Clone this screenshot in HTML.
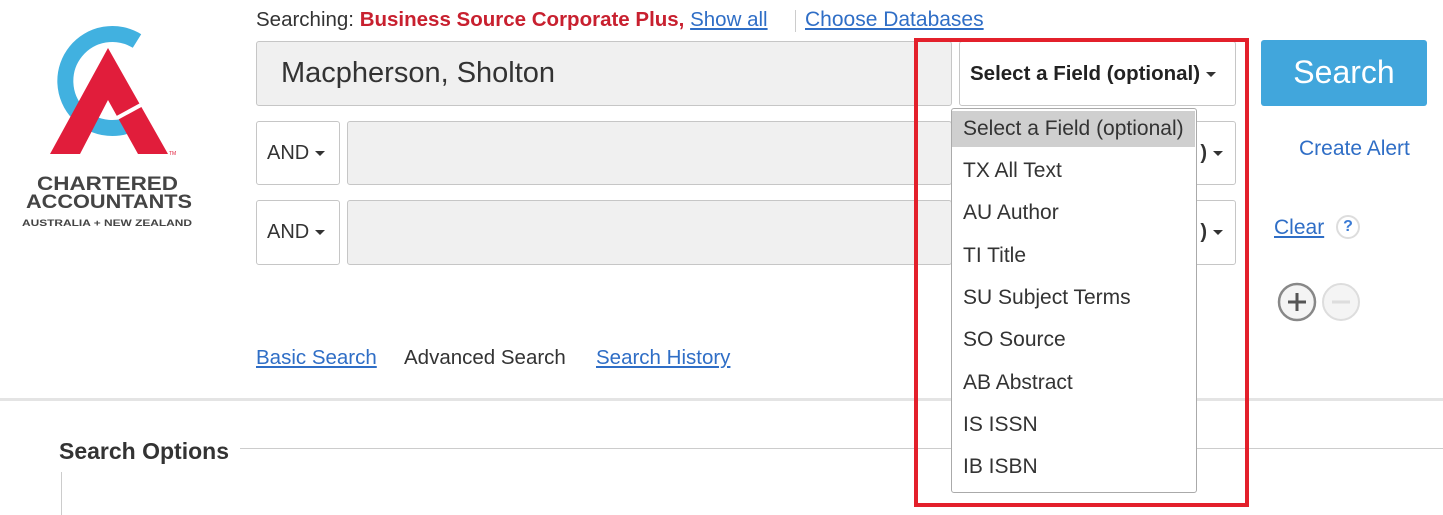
<!DOCTYPE html>
<html><head><style>
*{margin:0;padding:0;box-sizing:border-box}
body{width:1443px;height:515px;overflow:hidden;background:#fff;font-family:"Liberation Sans",sans-serif;color:#333;position:relative}
.a{position:absolute}
.lnk{color:#2f6ec6;text-decoration:underline}
.box{position:absolute;border:1px solid #c6c6c6;border-radius:3px}
.caret{display:inline-block;width:0;height:0;border-left:5px solid transparent;border-right:5px solid transparent;border-top:5px solid #333;vertical-align:middle;margin-left:6px}
.item{position:absolute;left:0;width:243px;height:36px;line-height:36px;padding-left:11px;font-size:21px;color:#333}
</style></head><body>
<svg class="a" style="left:0;top:0" width="240" height="240">
<path d="M137 41 A47 47 0 1 0 140 119" fill="none" stroke="#41b1e0" stroke-width="16"/>
<polygon points="108,48 50,154 80,154 108,100 138,154 168,154" fill="#e11d3b"/>
<line x1="117" y1="118" x2="150" y2="100" stroke="#fff" stroke-width="4"/>
<text x="169" y="155" font-size="5" fill="#e11d3b">TM</text>
<text x="37" y="190" font-size="19" font-weight="bold" fill="#444" textLength="141" lengthAdjust="spacingAndGlyphs">CHARTERED</text>
<text x="26" y="208" font-size="19" font-weight="bold" fill="#444" textLength="166" lengthAdjust="spacingAndGlyphs">ACCOUNTANTS</text>
<text x="22" y="226" font-size="9.5" font-weight="bold" fill="#444" textLength="170" lengthAdjust="spacingAndGlyphs">AUSTRALIA + NEW ZEALAND</text>
</svg>
<div class="a" style="left:256px;top:8px;font-size:20.5px">Searching: <b style="color:#c8202f">Business Source Corporate Plus,</b> <span class="lnk">Show all</span></div>
<div class="a" style="left:795px;top:10px;width:1px;height:22px;background:#ccc"></div>
<div class="a lnk" style="left:805px;top:8px;font-size:21px">Choose Databases</div>
<div class="box" style="left:256px;top:41px;width:696px;height:65px;background:#f0f0f0;font-size:29px;line-height:63px;padding-left:24px">Macpherson, Sholton</div>
<div class="box" style="left:959px;top:41px;width:277px;height:65px;font-size:20.5px;font-weight:bold;line-height:63px;padding-left:10px;color:#222">Select a Field (optional)<span class="caret"></span></div>
<div class="a" style="left:1261px;top:40px;width:166px;height:66px;background:#41a6dc;border-radius:3px;color:#fff;font-size:32px;line-height:64px;text-align:center">Search</div>
<div class="box" style="left:256px;top:121px;width:84px;height:64px;font-size:20px;line-height:62px;padding-left:10px">AND<span class="caret"></span></div>
<div class="box" style="left:952px;top:121px;width:284px;height:64px;font-size:20px;line-height:62px;text-align:right;padding-right:12px;font-weight:bold">)<span class="caret"></span></div>
<div class="box" style="left:347px;top:121px;width:605px;height:64px;background:#f0f0f0"></div>
<div class="box" style="left:256px;top:200px;width:84px;height:65px;font-size:20px;line-height:63px;padding-left:10px">AND<span class="caret"></span></div>
<div class="box" style="left:952px;top:200px;width:284px;height:65px;font-size:20px;line-height:63px;text-align:right;padding-right:12px;font-weight:bold">)<span class="caret"></span></div>
<div class="box" style="left:347px;top:200px;width:605px;height:65px;background:#f0f0f0"></div>
<div class="a lnk" style="left:1299px;top:137px;font-size:21px;text-decoration:none">Create Alert</div>
<div class="a lnk" style="left:1274px;top:216px;font-size:21px">Clear</div>
<div class="a" style="left:1336px;top:215px;width:24px;height:24px;border-radius:50%;border:2px solid #ddd;color:#3a7bd5;font-weight:bold;font-size:16px;text-align:center;line-height:20px">?</div>
<svg class="a" style="left:1276px;top:282px" width="90" height="40">
<circle cx="21" cy="20" r="18" fill="#f4f4f4" stroke="#888" stroke-width="2.5"/>
<path d="M21 11v18M12 20h18" stroke="#555" stroke-width="3"/>
<circle cx="65" cy="20" r="18" fill="#f4f4f4" stroke="#ddd" stroke-width="2"/>
<path d="M56 20h18" stroke="#ddd" stroke-width="3"/>
</svg>
<div class="a lnk" style="left:256px;top:346px;font-size:20.5px">Basic Search </div>
<div class="a" style="left:404px;top:346px;font-size:20.5px">Advanced Search</div>
<div class="a lnk" style="left:596px;top:346px;font-size:20.5px">Search History</div>
<div class="a" style="left:0;top:398px;width:1443px;height:3px;background:#e4e4e4"></div>
<div class="a" style="left:59px;top:438px;font-size:23px;font-weight:bold;color:#333">Search Options</div>
<div class="a" style="left:240px;top:448px;width:1203px;height:1px;background:#ccc"></div>
<div class="a" style="left:61px;top:472px;width:1px;height:43px;background:#ccc"></div>
<div class="a" style="left:951px;top:108px;width:246px;height:385px;background:#fff;border:1px solid #aaa;border-radius:3px">
<div class="item" style="top:2px;background:#cfcfcf">Select a Field (optional)</div>
<div class="item" style="top:44px">TX All Text</div>
<div class="item" style="top:86px">AU Author</div>
<div class="item" style="top:129px">TI Title</div>
<div class="item" style="top:171px">SU Subject Terms</div>
<div class="item" style="top:213px">SO Source</div>
<div class="item" style="top:256px">AB Abstract</div>
<div class="item" style="top:298px">IS ISSN</div>
<div class="item" style="top:340px">IB ISBN</div>
</div>
<div class="a" style="left:914px;top:38px;width:335px;height:469px;border:4px solid #e3202b"></div>
</body></html>
